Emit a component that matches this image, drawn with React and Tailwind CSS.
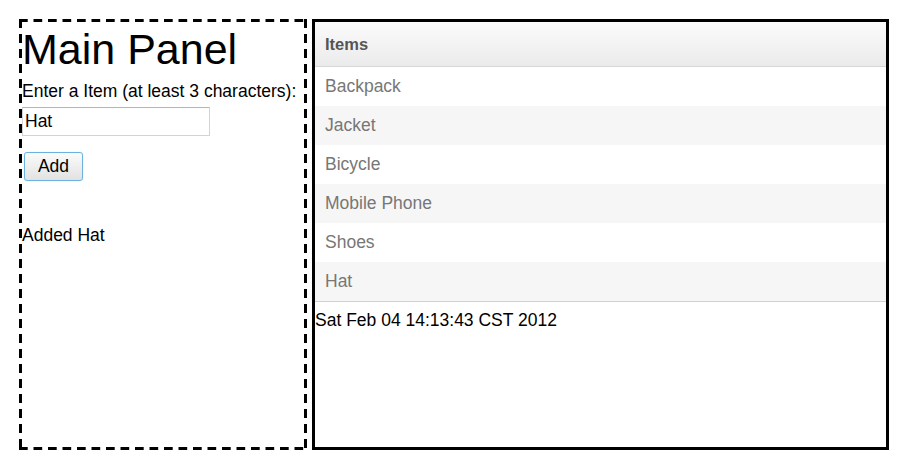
import React, { useState } from 'react';

const initialItems = ['Backpack', 'Jacket', 'Bicycle', 'Mobile Phone', 'Shoes', 'Hat'];

const MainPanel = ({ value, setValue, onAdd, message }) => (
    <div className="w-[288px] h-[431px] shrink-0 p-[3px] [background:linear-gradient(90deg,#000_9px,transparent_9px)_0_0/14.5px_3px_repeat-x,linear-gradient(90deg,#000_9px,transparent_9px)_0_100%/14.5px_3px_repeat-x,linear-gradient(180deg,#000_9px,transparent_9px)_0_0/3px_15px_repeat-y,linear-gradient(180deg,#000_9px,transparent_9px)_100%_0/3px_15px_repeat-y]">
        <h1 className="text-[43px] leading-[54px] text-black">Main Panel</h1>
        <p className="mt-[5px] text-[17.5px] leading-[20px] text-black">Enter a Item (at least 3 characters):</p>
        <input
            value={value}
            onChange={(e) => setValue(e.target.value)}
            className="mt-[6px] block w-[188px] h-[29px] border border-[#d4d4d4] border-t-[#b5b5b5] px-[2px] text-[17.5px] text-black outline-none"
        />
        <button
            onClick={onAdd}
            className="mt-[16px] ml-[2px] block w-[59px] h-[29px] rounded-[3px] border border-[#6cb2dc] bg-gradient-to-b from-[#fbfbfb] to-[#e2e2e2] text-[17.5px] leading-none text-black shadow-[0_0_1px_#9fd0ee]"
        >
            Add
        </button>
        <p className="mt-[44px] text-[17.5px] leading-[20px] text-black">{message}</p>
    </div>
);

const ItemsPanel = ({ items }) => (
    <div className="w-[577px] h-[431px] shrink-0 border-[3px] border-black">
        <div className="h-[45px] flex items-center px-[10px] bg-gradient-to-b from-[#fbfbfb] to-[#ebebeb] border-b border-[#d6d6d6]">
            <span className="text-[16.5px] font-bold text-[#555]">Items</span>
        </div>
        <div className="border-b border-[#d0d0d0]">
            {items.map((item, i) => (
                <div
                    key={item + i}
                    className={`h-[39px] flex items-center px-[10px] text-[17.5px] text-[#777] ${i % 2 === 1 ? 'bg-[#f6f6f6]' : 'bg-white'}`}
                >
                    {item}
                </div>
            ))}
        </div>
        <p className="mt-[8px] text-[17.5px] leading-[20px] text-black">Sat Feb 04 14:13:43 CST 2012</p>
    </div>
);

export default function App() {
    const [items, setItems] = useState(initialItems);
    const [value, setValue] = useState('Hat');
    const [message, setMessage] = useState('Added Hat');

    const handleAdd = () => {
        if (value.length >= 3) {
            setItems([...items, value]);
            setMessage('Added ' + value);
        }
    };

    return (
        <div className="w-[904px] h-[462px] bg-white pl-[19px] pt-[19px] flex gap-[5px] font-['Liberation_Sans',Arial,sans-serif]">
            <MainPanel value={value} setValue={setValue} onAdd={handleAdd} message={message} />
            <ItemsPanel items={items} />
        </div>
    );
}
